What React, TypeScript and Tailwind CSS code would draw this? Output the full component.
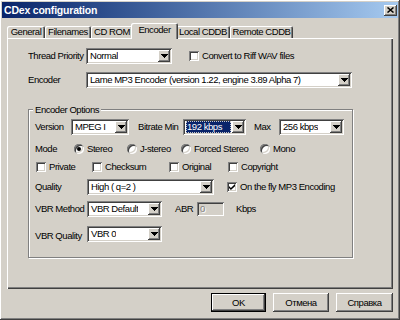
import clsx from 'clsx';

const raised =
  'shadow-[inset_-1px_-1px_0_#404040,inset_1px_1px_0_#ffffff,inset_-2px_-2px_0_#808080,inset_2px_2px_0_#d4d0c8]';
const sunken =
  'shadow-[inset_1px_1px_0_#808080,inset_-1px_-1px_0_#ffffff,inset_2px_2px_0_#404040,inset_-2px_-2px_0_#d4d0c8]';

function Arrow() {
  return (
    <svg width="7" height="4" viewBox="0 0 7 4" shapeRendering="crispEdges" aria-hidden="true">
      <path d="M0 0h7v1h-1v1h-1v1h-1v1h-1v-1h-1v-1h-1v-1h-1z" fill="#000" />
    </svg>
  );
}

interface ComboProps {
  value: string;
  width: string;
  focused?: boolean;
}

function Combo({ value, width, focused }: ComboProps) {
  return (
    <div className={clsx('flex h-[16px] shrink-0 bg-white p-[2px]', sunken, width)}>
      <div className="flex min-w-0 flex-1 items-center">
        {focused ? (
          <span className="mx-[1px] flex h-full flex-1 items-center bg-[#0a246a] pl-[1px] text-white outline-1 outline-dotted outline-[#c8c8c8] -outline-offset-1">
            {value}
          </span>
        ) : (
          <span className="truncate pl-[2px]">{value}</span>
        )}
      </div>
      <div className={clsx('flex w-[12px] items-center justify-center bg-[#d4d0c8]', raised)}>
        <Arrow />
      </div>
    </div>
  );
}

function Check({ checked }: { checked?: boolean }) {
  return (
    <span className={clsx('flex h-[10px] w-[10px] shrink-0 items-center justify-center bg-white', sunken)}>
      {checked && (
        <svg width="6" height="6" viewBox="0 0 7 7" aria-hidden="true">
          <path d="M0 2.4L2.2 4.6 7 0v2.6L2.2 7 0 4.8z" fill="#000" />
        </svg>
      )}
    </span>
  );
}

function Radio({ on }: { on?: boolean }) {
  return (
    <span className={clsx('flex h-[10px] w-[10px] shrink-0 items-center justify-center rounded-full bg-white', sunken)}>
      {on && <span className="h-[4px] w-[4px] rounded-full bg-black" />}
    </span>
  );
}

function CheckItem({ label, checked, width }: { label: string; checked?: boolean; width?: string }) {
  return (
    <div className={clsx('flex items-center gap-[3px]', width)}>
      <Check checked={checked} />
      <span>{label}</span>
    </div>
  );
}

function RadioItem({ label, on, width }: { label: string; on?: boolean; width?: string }) {
  return (
    <div className={clsx('flex items-center gap-[3px]', width)}>
      <Radio on={on} />
      <span>{label}</span>
    </div>
  );
}

const tabs = [
  { label: 'General', w: 'w-[38px]' },
  { label: 'Filenames', w: 'w-[46px]' },
  { label: 'CD ROM', w: 'w-[42px]' },
  { label: 'Encoder', w: 'w-[47px]', active: true },
  { label: 'Local CDDB', w: 'w-[54px]' },
  { label: 'Remote CDDB', w: 'w-[63px]' },
];

export default function App() {
  return (
    <div
      className={clsx(
        "flex h-[320px] w-[400px] flex-col bg-[#d4d0c8] p-[2px] font-['Liberation_Sans',Arial,sans-serif] text-[9.5px] leading-none tracking-[-0.45px] text-black",
        raised,
      )}
    >
      {/* Title bar */}
      <div className="flex h-[16px] items-center bg-linear-to-r from-[#0a246a] to-[#a6caf0] pl-[2px] pr-[1px]">
        <span className="flex-1 text-[10.5px] font-bold tracking-[-0.2px] text-white">CDex configuration</span>
        <span className={clsx('flex h-[11px] w-[13px] items-center justify-center bg-[#d4d0c8]', raised)}>
          <svg width="7" height="6" viewBox="0 0 7 6" aria-hidden="true">
            <path d="M0.5 0.5L6.5 5.5M6.5 0.5L0.5 5.5" stroke="#000" strokeWidth="1.5" />
          </svg>
        </span>
      </div>

      {/* Tabs */}
      <div className="ml-[5px] mt-[5px] flex h-[15px] items-end">
        {tabs.map((t) =>
          t.active ? (
            <div
              key={t.label}
              className={clsx(
                'relative z-10 -mx-[2px] -mb-[1px] flex h-[16px] items-center justify-center rounded-t-[2px] bg-[#d4d0c8] pb-[2px] shadow-[inset_1px_1px_0_#ffffff,inset_-1px_0_0_#404040,inset_-2px_0_0_#808080]',
                t.w,
              )}
            >
              {t.label}
            </div>
          ) : (
            <div
              key={t.label}
              className={clsx(
                'flex h-[12px] items-center justify-center rounded-t-[2px] shadow-[inset_1px_1px_0_#ffffff,inset_-1px_0_0_#404040,inset_-2px_0_0_#808080]',
                t.w,
              )}
            >
              {t.label}
            </div>
          ),
        )}
      </div>

      {/* Tab panel */}
      <div className="ml-[5px] h-[251px] w-[386px] pl-[21px] pt-[10px] shadow-[inset_1px_1px_0_#ffffff,inset_-1px_-1px_0_#404040,inset_-2px_-2px_0_#808080]">
        <div className="flex h-[16px] items-center">
          <span className="w-[58px]">Thread Priority</span>
          <Combo value="Normal" width="w-[86px]" />
          <div className="ml-[17px]">
            <CheckItem label="Convert to Riff WAV files" />
          </div>
        </div>

        <div className="mt-[8px] flex h-[16px] items-center">
          <span className="w-[58px]">Encoder</span>
          <Combo value="Lame MP3 Encoder (version 1.22, engine 3.89 Alpha 7)" width="w-[266px]" />
        </div>

        {/* Encoder Options group */}
        <div className="relative mt-[21px] h-[149px] w-[325px] border border-[#808080] pl-[6px] pt-[9px] shadow-[inset_1px_1px_0_#ffffff,1px_1px_0_#ffffff]">
          <span className="absolute left-[4px] top-[-5px] bg-[#d4d0c8] px-[2px]">Encoder Options</span>

          <div className="flex h-[16px] items-center">
            <span className="w-[36px]">Version</span>
            <Combo value="MPEG I" width="w-[58px]" />
            <span className="ml-[9px] w-[45px]">Bitrate Min</span>
            <Combo value="192 kbps" width="w-[63px]" focused />
            <span className="ml-[8px] w-[25px]">Max</span>
            <Combo value="256 kbps" width="w-[65px]" />
          </div>

          <div className="mt-[8px] flex h-[12px] items-center">
            <span className="w-[39px]">Mode</span>
            <RadioItem label="Stereo" on width="w-[53px]" />
            <RadioItem label="J-stereo" width="w-[54px]" />
            <RadioItem label="Forced Stereo" width="w-[79px]" />
            <RadioItem label="Mono" />
          </div>

          <div className="ml-[1px] mt-[6px] flex h-[12px] items-center">
            <CheckItem label="Private" width="w-[56px]" />
            <CheckItem label="Checksum" width="w-[77px]" />
            <CheckItem label="Original" width="w-[59px]" />
            <CheckItem label="Copyright" />
          </div>

          <div className="mt-[6px] flex h-[16px] items-center">
            <span className="w-[52px]">Quality</span>
            <Combo value="High ( q=2 )" width="w-[127px]" />
            <div className="ml-[13px]">
              <CheckItem label="On the fly MP3 Encoding" checked />
            </div>
          </div>

          <div className="mt-[6px] flex h-[16px] items-center">
            <span className="w-[52px]">VBR Method</span>
            <Combo value="VBR Default" width="w-[75px]" />
            <span className="ml-[13px] w-[22px]">ABR</span>
            <div className={clsx('flex h-[14px] w-[27px] items-center bg-[#d4d0c8] pl-[3px]', sunken)}>
              <span className="text-[#808080] [text-shadow:1px_1px_0_#ffffff]">0</span>
            </div>
            <span className="ml-[12px]">Kbps</span>
          </div>

          <div className="mt-[9px] flex h-[16px] items-center">
            <span className="mt-[4px] w-[52px]">VBR Quality</span>
            <Combo value="VBR 0" width="w-[75px]" />
          </div>
        </div>
      </div>

      {/* Buttons */}
      <div className="mt-[4px] flex justify-end gap-[7px] pr-[5px]">
        <button className={clsx('h-[19px] w-[55px] border border-black bg-[#d4d0c8]', raised)}>OK</button>
        <button className={clsx('h-[19px] w-[56px] bg-[#d4d0c8]', raised)}>Отмена</button>
        <button className={clsx('h-[19px] w-[57px] bg-[#d4d0c8]', raised)}>Справка</button>
      </div>
    </div>
  );
}
